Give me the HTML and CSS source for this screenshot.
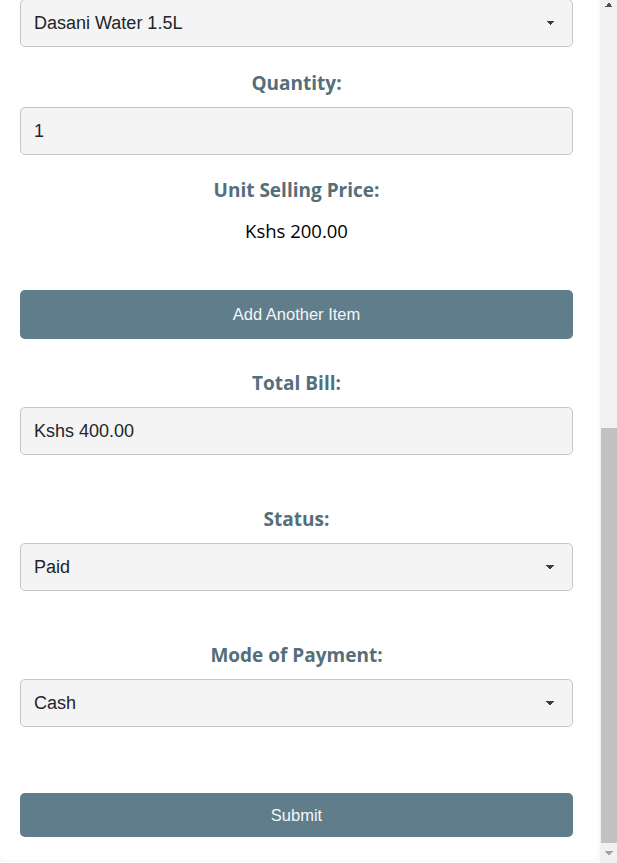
FILE: index.html
```html
<!DOCTYPE html>
<html lang="en">
<head>
<meta charset="utf-8">
<title>Record a Sale</title>
<link rel="stylesheet" href="styles.css">
</head>
<body>
<div class="window">
  <div class="viewport">
    <div class="modal">
      <form class="sale-form">
        <div class="field field-first">
          <select class="control select"><option>Dasani Water 1.5L</option></select>
        </div>
        <div class="field">
          <label class="label">Quantity:</label>
          <input class="control" type="text" value="1">
        </div>
        <div class="field field-price">
          <label class="label">Unit Selling Price:</label>
          <p class="price">Kshs 200.00</p>
        </div>
        <button type="button" class="btn btn-add">Add Another Item</button>
        <div class="field field-wide">
          <label class="label">Total Bill:</label>
          <input class="control" type="text" value="Kshs 400.00">
        </div>
        <div class="field field-wide">
          <label class="label">Status:</label>
          <select class="control select"><option>Paid</option></select>
        </div>
        <div class="field field-last">
          <label class="label">Mode of Payment:</label>
          <select class="control select"><option>Cash</option></select>
        </div>
        <button type="button" class="btn btn-submit">Submit</button>
      </form>
    </div>
  </div>
  <div class="scrollbar" aria-hidden="true">
    <div class="sb-btn sb-up"></div>
    <div class="sb-track"><div class="sb-thumb"></div></div>
    <div class="sb-btn sb-down"></div>
  </div>
</div>
</body>
</html>
```
FILE: styles.css
```css
* { box-sizing: border-box; }

html, body {
  margin: 0;
  padding: 0;
  height: 100%;
  overflow: hidden;
  background: #fafafa;
}

.window {
  display: flex;
  height: 863px;
}

.viewport {
  flex: 1;
  height: 863px;
  overflow: hidden;
  display: flex;
  flex-direction: column-reverse;
  background: #fafafa;
}

/* drawn scrollbar (page scrolled to the bottom) */
.scrollbar {
  flex: none;
  width: 17px;
  height: 863px;
  display: flex;
  flex-direction: column;
  background: #f1f1f1;
}
.sb-btn {
  flex: none;
  height: 17px;
  background-repeat: no-repeat;
  background-size: 8px 4px;
  background-position: 5px 3px;
}
.sb-up {
  background-image: conic-gradient(from 135deg at 50% 0, #505050 0 90deg, transparent 90deg);
}
.sb-down {
  background-image: conic-gradient(from -45deg at 50% 100%, #a3a3a3 0 90deg, transparent 90deg);
  background-position: 5px 5px;
}
.sb-track {
  flex: 1;
  display: flex;
  flex-direction: column;
  justify-content: flex-end;
  padding: 0 0 3px 1px;
}
.sb-thumb {
  height: 415px;
  background: #c1c1c1;
}

.modal {
  flex: none;
  width: 598px;
  margin: 0 2px 3px 0;
  background: #fff;
  border-radius: 8px;
  padding: 20px 25px 23px 20px;
}

.sale-form {
  display: flex;
  flex-direction: column;
}

.field {
  display: flex;
  flex-direction: column;
  margin-bottom: 23px;
}
.field-first { margin-bottom: 24px; }
.field-price { margin-bottom: 47px; }
.field-wide { margin-bottom: 52px; }
.field-last { margin-bottom: 66px; }

.label {
  text-align: center;
  font: 700 19px/24px "Open Sans", sans-serif;
  color: #546e7a;
  margin-bottom: 12px;
}

.control {
  display: block;
  width: 100%;
  height: 48px;
  margin: 0;
  padding: 0 13px;
  border: 1px solid #c4c7ca;
  border-radius: 5px;
  background-color: #f4f4f4;
  font: 400 18px "Liberation Sans", Arial, sans-serif;
  color: #212529;
  outline: none;
}

.select {
  -webkit-appearance: none;
  appearance: none;
  background-image: conic-gradient(from -45deg at 50% 100%, #3c3c3c 0 90deg, transparent 90deg);
  background-repeat: no-repeat;
  background-size: 8px 4px;
  background-position: right 18px center;
}

.price {
  margin: 5px 0 0;
  text-align: center;
  font: 400 18.5px/24px "Open Sans", sans-serif;
  color: #000;
}

.btn {
  display: block;
  width: 100%;
  border: 0;
  border-radius: 5px;
  background: #607d8b;
  color: #f4f7f8;
  font: 400 16.5px "Liberation Sans", Arial, sans-serif;
  cursor: pointer;
}

.btn-add {
  height: 49px;
  margin-bottom: 32px;
}

.btn-submit {
  height: 44px;
}
```
